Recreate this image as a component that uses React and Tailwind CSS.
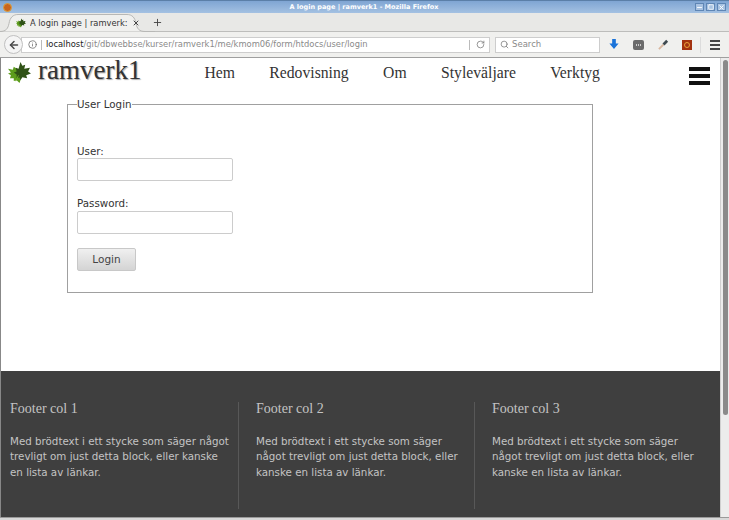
import React from 'react';
import { ArrowLeft, Info, RotateCw, Search, Plus, X, Minus, Square } from 'lucide-react';

const navItems = ['Hem', 'Redovisning', 'Om', 'Styleväljare', 'Verktyg'];

const footerCols = [
  { title: 'Footer col 1', width: 'w-[238px]', pad: 'pl-[9px] pr-[8px]', border: true },
  { title: 'Footer col 2', width: 'w-[236px]', pad: 'pl-[17px] pr-[12px]', border: true },
  { title: 'Footer col 3', width: 'w-[236px]', pad: 'pl-[17px] pr-[10px]', border: false },
];

const Leaf = ({ className }) => (
  <svg viewBox="0 0 24 22" className={className}>
    <path fill="#5c9c1c" d="M0 7l5 1 1-3 3 2 3 3 2 5-1 4-1 3-3-3-3 1 0-3-4 0 1-3-3-2 3-1z" />
    <path fill="#2f5216" d="M13 0l2 4 3-1-1 4 6-1-2 4 3 2-5 2 1 3-5-1-2 3-1-3-3 1 0-4-3-2 3-1-1-4 3 1z" />
    <path stroke="#6fae28" strokeWidth="1" d="M8 20l3-6" />
  </svg>
);

const TabShape = () => (
  <svg viewBox="0 0 155 18" className="absolute left-0 top-0 w-[155px] h-[18px]">
    <path fill="#f0f0ee" stroke="#b8b8b6" d="M0 17.5c6 0 8-3 9-8 1-6 4-9 9-9h109c5 0 8 3 9 9 1 5 3 8 9 8h10" />
  </svg>
);

const WinButton = ({ children }) => (
  <div className="w-[9px] h-[8px] bg-[#a9c3e2] border border-[#5f86b5] flex items-center justify-center text-white">
    {children}
  </div>
);

const BrowserChrome = () => (
  <div className="shrink-0 font-['DejaVu_Sans',sans-serif]">
    {/* title bar */}
    <div className="h-[13px] bg-gradient-to-b from-[#7fa5d3] to-[#a4c1e2] border-t border-[#5b7fa8] flex items-center pl-[3px] pr-[3px]">
      <div className="w-[9px] h-[9px] rounded-full bg-[#c9651f] border border-[#d9a040]" />
      <div className="flex-1 pl-[21px] text-center text-white text-[6.5px] leading-none font-bold">A login page | ramverk1 - Mozilla Firefox</div>
      <div className="flex gap-[2px]">
        <WinButton><Minus size={7} strokeWidth={3} /></WinButton>
        <WinButton><Square size={6} strokeWidth={3} /></WinButton>
        <WinButton><X size={7} strokeWidth={3} /></WinButton>
      </div>
    </div>
    {/* tab strip */}
    <div className="h-[19px] bg-[#e8e8e6] flex items-end border-b border-[#bdbdbb]">
      <div className="relative w-[155px] h-[18px] -mb-px flex items-center pl-[16px] pr-[16px] text-[8.3px] text-[#333] shrink-0">
        <TabShape />
        <Leaf className="relative w-[10px] h-[10px] shrink-0" />
        <span className="relative ml-[4px] w-[98px] whitespace-nowrap overflow-hidden shrink-0">A login page | ramverk:</span>
        <X size={8} strokeWidth={3} className="relative shrink-0 ml-[4px] text-[#444]" />
      </div>
      <Plus size={11} strokeWidth={2} className="ml-[-3px] mb-[3px] text-[#444]" />
    </div>
    {/* url bar */}
    <div className="h-[26px] bg-[#f0f0ee] border-b border-[#9f9f9f] flex items-center pl-[4px]">
      <div className="w-[19px] h-[19px] rounded-full bg-[#f5f5f5] border border-[#c0c0c0] flex items-center justify-center shrink-0 z-10">
        <ArrowLeft size={12} strokeWidth={3} className="text-[#4a4a4a]" />
      </div>
      <div className="w-[469px] h-[16px] -ml-[2px] bg-white border border-[#cdcdcd] flex items-center pl-[6px] pr-[4px] text-[8.35px] whitespace-nowrap">
        <Info size={9} className="text-[#666] shrink-0" />
        <div className="w-px h-[10px] bg-[#bbb] mx-[4px] shrink-0" />
        <span className="text-[#222]">localhost</span>
        <span className="text-[#8a8a8a]">/git/dbwebbse/kurser/ramverk1/me/kmom06/form/htdocs/user/login</span>
        <div className="flex-1" />
        <div className="w-px h-[10px] bg-[#bbb] mr-[6px] shrink-0" />
        <RotateCw size={9} className="text-[#777] shrink-0" />
      </div>
      <div className="w-[105px] h-[16px] ml-[5px] bg-white border border-[#cdcdcd] flex items-center pl-[4px] text-[8.5px] text-[#8a8a8a]">
        <Search size={9} className="mr-[3px] text-[#777]" />
        Search
      </div>
      <svg viewBox="0 0 10 12" className="w-[10px] h-[11px] ml-[9px]">
        <path fill="#1a73d9" d="M3 0h4v5h3l-5 6-5-6h3z" />
      </svg>
      <div className="w-[11px] h-[10px] ml-[14px] rounded-[2px] bg-[#6b6b6b] flex items-center justify-center gap-px">
        <div className="w-px h-[2px] bg-[#ccc]" />
        <div className="w-px h-[2px] bg-[#ccc]" />
        <div className="w-px h-[2px] bg-[#ccc]" />
      </div>
      <svg viewBox="0 0 12 12" className="w-[11px] h-[11px] ml-[14px]">
        <path stroke="#d9b8a0" strokeWidth="2" d="M1 11l5-5" />
        <path stroke="#3f4a50" strokeWidth="3" d="M6 6l4-4" />
      </svg>
      <div className="w-[10px] h-[10px] ml-[13px] bg-[#a3320f] flex items-center justify-center">
        <div className="w-[6px] h-[6px] rounded-full border border-[#e8a33a]" />
      </div>
      <div className="w-px h-[16px] bg-[#dcdcdc] ml-[8px]" />
      <div className="ml-[9px] w-[10px] flex flex-col gap-[2px]">
        <div className="h-[2px] bg-[#444]" />
        <div className="h-[2px] bg-[#444]" />
        <div className="h-[2px] bg-[#444]" />
      </div>
    </div>
  </div>
);

const Header = () => (
  <header className="h-[46px] shrink-0 flex items-start font-['Liberation_Serif',serif]">
    <Leaf className="w-[23px] h-[21px] ml-[7px] mt-[4px] shrink-0" />
    <div className="ml-[7px] text-[27px] leading-[24px] text-[#333] [text-shadow:1px_1px_1px_#aaa] whitespace-nowrap">ramverk1</div>
    <nav className="ml-[63px] mt-[6px] flex gap-[34.4px] text-[15.7px] leading-[18px] text-[#333] whitespace-nowrap">
      {navItems.map((item) => (
        <span key={item}>{item}</span>
      ))}
    </nav>
    <div className="ml-auto mr-[10px] mt-[9px] w-[21px] flex flex-col gap-[3px]">
      <div className="h-[4px] bg-[#111]" />
      <div className="h-[4px] bg-[#111]" />
      <div className="h-[4px] bg-[#111]" />
    </div>
  </header>
);

const LoginForm = () => (
  <main className="flex-1 pl-[66px] font-['DejaVu_Sans',sans-serif] text-[10.3px] text-[#333]">
    <fieldset className="w-[526px] h-[195px] -mt-[6px] border border-[#a0a0a0] px-[9px]">
      <legend className="leading-[13px]">User Login</legend>
      <label className="block mt-[33px] leading-[14px]">User:</label>
      <input className="block w-[156px] h-[23px] bg-white border border-[#ccc] rounded-[2px]" />
      <label className="block mt-[15px] leading-[14px]">Password:</label>
      <input type="password" className="block mt-[1px] w-[156px] h-[23px] bg-white border border-[#ccc] rounded-[2px]" />
      <button className="block mt-[14px] w-[59px] h-[23px] rounded-[2px] border border-[#c8c8c8] bg-gradient-to-b from-[#f0f0f0] to-[#d4d4d4] text-[#444] text-[10.5px]">
        Login
      </button>
    </fieldset>
  </main>
);

const Footer = () => (
  <footer className="h-[146px] shrink-0 bg-[#3f3f3f] pt-[31px] flex text-[#c4c4c4]">
    {footerCols.map((col) => (
      <div key={col.title} className={`${col.width} ${col.pad} h-[107px] shrink-0 ${col.border ? 'border-r border-[#585858]' : ''}`}>
        <h4 className="font-['Liberation_Serif',serif] text-[14px] leading-[14px] font-normal">{col.title}</h4>
        <p className="mt-[18px] font-['DejaVu_Sans',sans-serif] text-[10.3px] leading-[15.4px]">
          Med brödtext i ett stycke som säger något trevligt om just detta block, eller kanske en lista av länkar.
        </p>
      </div>
    ))}
  </footer>
);

export default function App() {
  return (
    <div className="w-[729px] h-[520px] overflow-hidden bg-white flex flex-col">
      <BrowserChrome />
      <div className="flex-1 flex min-h-0 border-l border-[#888]">
        <div className="flex-1 flex flex-col min-w-0">
          <Header />
          <LoginForm />
          <Footer />
        </div>
        <div className="w-[9px] bg-[#ececec] border-l border-[#d0d0d0] pt-[2px] flex justify-center shrink-0">
          <div className="w-[5px] h-[355px] rounded-full bg-[#8a8a8a]" />
        </div>
      </div>
      <div className="h-[3px] shrink-0 bg-[#d8d8d8] border-t border-[#9a9a9a]" />
    </div>
  );
}
